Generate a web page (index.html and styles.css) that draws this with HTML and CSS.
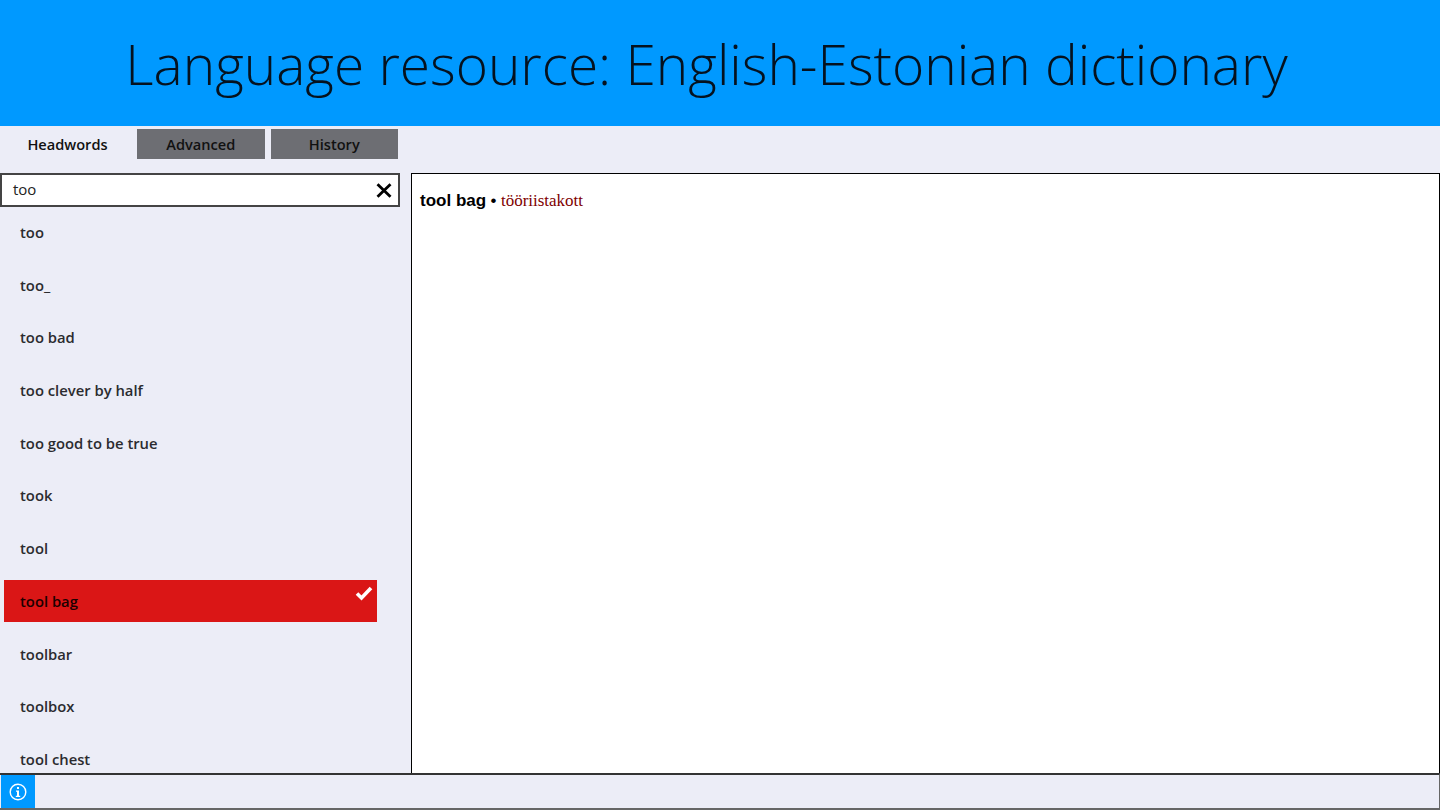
FILE: index.html
```html
<!DOCTYPE html>
<html lang="en">
<head>
<meta charset="utf-8">
<title>English-Estonian dictionary</title>
<link rel="stylesheet" href="styles.css">
</head>
<body>
<header class="banner"><h1 class="title">Language resource: English-Estonian dictionary</h1></header>
<nav class="tabs">
  <div class="tab tab-active">Headwords</div>
  <div class="tab">Advanced</div>
  <div class="tab">History</div>
</nav>
<main class="main">
  <aside class="side">
    <div class="search">
      <span class="search-text">too</span>
      <svg class="clear" width="16" height="15" viewBox="0 0 16 15"><path d="M1.5 1.2L14.5 13.8M14.5 1.2L1.5 13.8" stroke="#000" stroke-width="2.8" fill="none"/></svg>
    </div>
    <ul class="list">
      <li class="item">too</li>
      <li class="item">too_</li>
      <li class="item">too bad</li>
      <li class="item">too clever by half</li>
      <li class="item">too good to be true</li>
      <li class="item">took</li>
      <li class="item">tool</li>
      <li class="item item-selected">tool bag
        <svg class="check" width="18" height="16" viewBox="0 0 18 16"><path d="M2 8.5L6.5 13L16 3" stroke="#fff" stroke-width="3.6" fill="none"/></svg>
      </li>
      <li class="item">toolbar</li>
      <li class="item">toolbox</li>
      <li class="item">tool chest</li>
    </ul>
  </aside>
  <section class="entry">
    <p class="entry-line"><b class="head">tool bag</b> <span class="bullet">•</span> <span class="trans">tööriistakott</span></p>
  </section>
</main>
<footer class="status">
  <div class="info">
    <svg width="20" height="20" viewBox="0 0 20 20"><circle cx="10" cy="10" r="7.8" stroke="#fff" stroke-width="1.4" fill="none"/><path d="M8 8.6H11V13.8H12.2V15H7.8V13.8H9V9.8H8Z" fill="#fff"/><rect x="9" y="5" width="2" height="2" fill="#fff"/></svg>
  </div>
</footer>
</body>
</html>
```
FILE: styles.css
```css
* { box-sizing: border-box; }
html, body { margin: 0; padding: 0; }
body {
  width: 1440px;
  height: 810px;
  overflow: hidden;
  background: #ecedf7;
  font-family: "Open Sans", "Noto Sans", sans-serif;
  display: flex;
  flex-direction: column;
}
.banner {
  height: 126px;
  flex: none;
  background: #0099ff;
  display: flex;
  align-items: center;
  justify-content: center;
  padding-right: 27px;
}
.title {
  margin: 0;
  font-size: 55px;
  font-weight: 300;
  color: #05121f;
  white-space: nowrap;
}
.tabs {
  flex: none;
  height: 47px;
  padding-top: 3px;
  display: flex;
  gap: 6px;
  align-items: flex-start;
}
.tab {
  width: 127.5px;
  height: 30px;
  background: #6d6e73;
  color: #111;
  font-size: 14.6px;
  font-weight: 600;
  display: flex;
  align-items: center;
  justify-content: center;
}
.tab-active {
  width: 131px;
  background: none;
  color: #111;
  padding-left: 4px;
}
.main {
  flex: 1;
  min-height: 0;
  display: flex;
}
.side {
  width: 411px;
  flex: none;
  overflow: hidden;
}
.search {
  width: 400px;
  height: 34px;
  background: #fff;
  border: 2px solid #444;
  display: flex;
  align-items: center;
  justify-content: space-between;
  padding: 0 6px 2px 11px;
  font-size: 15px;
  color: #222;
}
.clear {
  margin-top: 2px;
}
.list {
  list-style: none;
  margin: 4px 0 0;
  padding: 0;
}
.item {
  position: relative;
  width: 373px;
  height: 42px;
  margin: 0 0 10.7px 4px;
  padding-left: 16px;
  display: flex;
  align-items: center;
  font-size: 14.8px;
  font-weight: 600;
  color: #2b2b2f;
}
.item-selected {
  background: #da1616;
  color: #1c0000;
}
.check {
  position: absolute;
  right: 4px;
  top: 5px;
}
.entry {
  flex: 1;
  background: #fff;
  border: 1px solid #000;
  border-bottom: 0;
  padding: 14px 8px;
}
.entry-line {
  margin: 0;
  font-size: 17px;
  color: #000;
}
.head {
  font-family: "Liberation Sans", Arial, sans-serif;
  font-weight: 700;
}
.bullet {
  font-family: "Liberation Sans", Arial, sans-serif;
}
.trans {
  font-family: "Liberation Serif", "Times New Roman", serif;
  color: #800000;
}
.status {
  flex: none;
  height: 37px;
  border-top: 2px solid #333;
  border-bottom: 2px solid #666;
  border-right: 1px solid #666;
  padding-left: 1px;
  display: flex;
}
.info {
  width: 34px;
  background: #0099ff;
  display: flex;
  align-items: center;
  justify-content: center;
}
```
